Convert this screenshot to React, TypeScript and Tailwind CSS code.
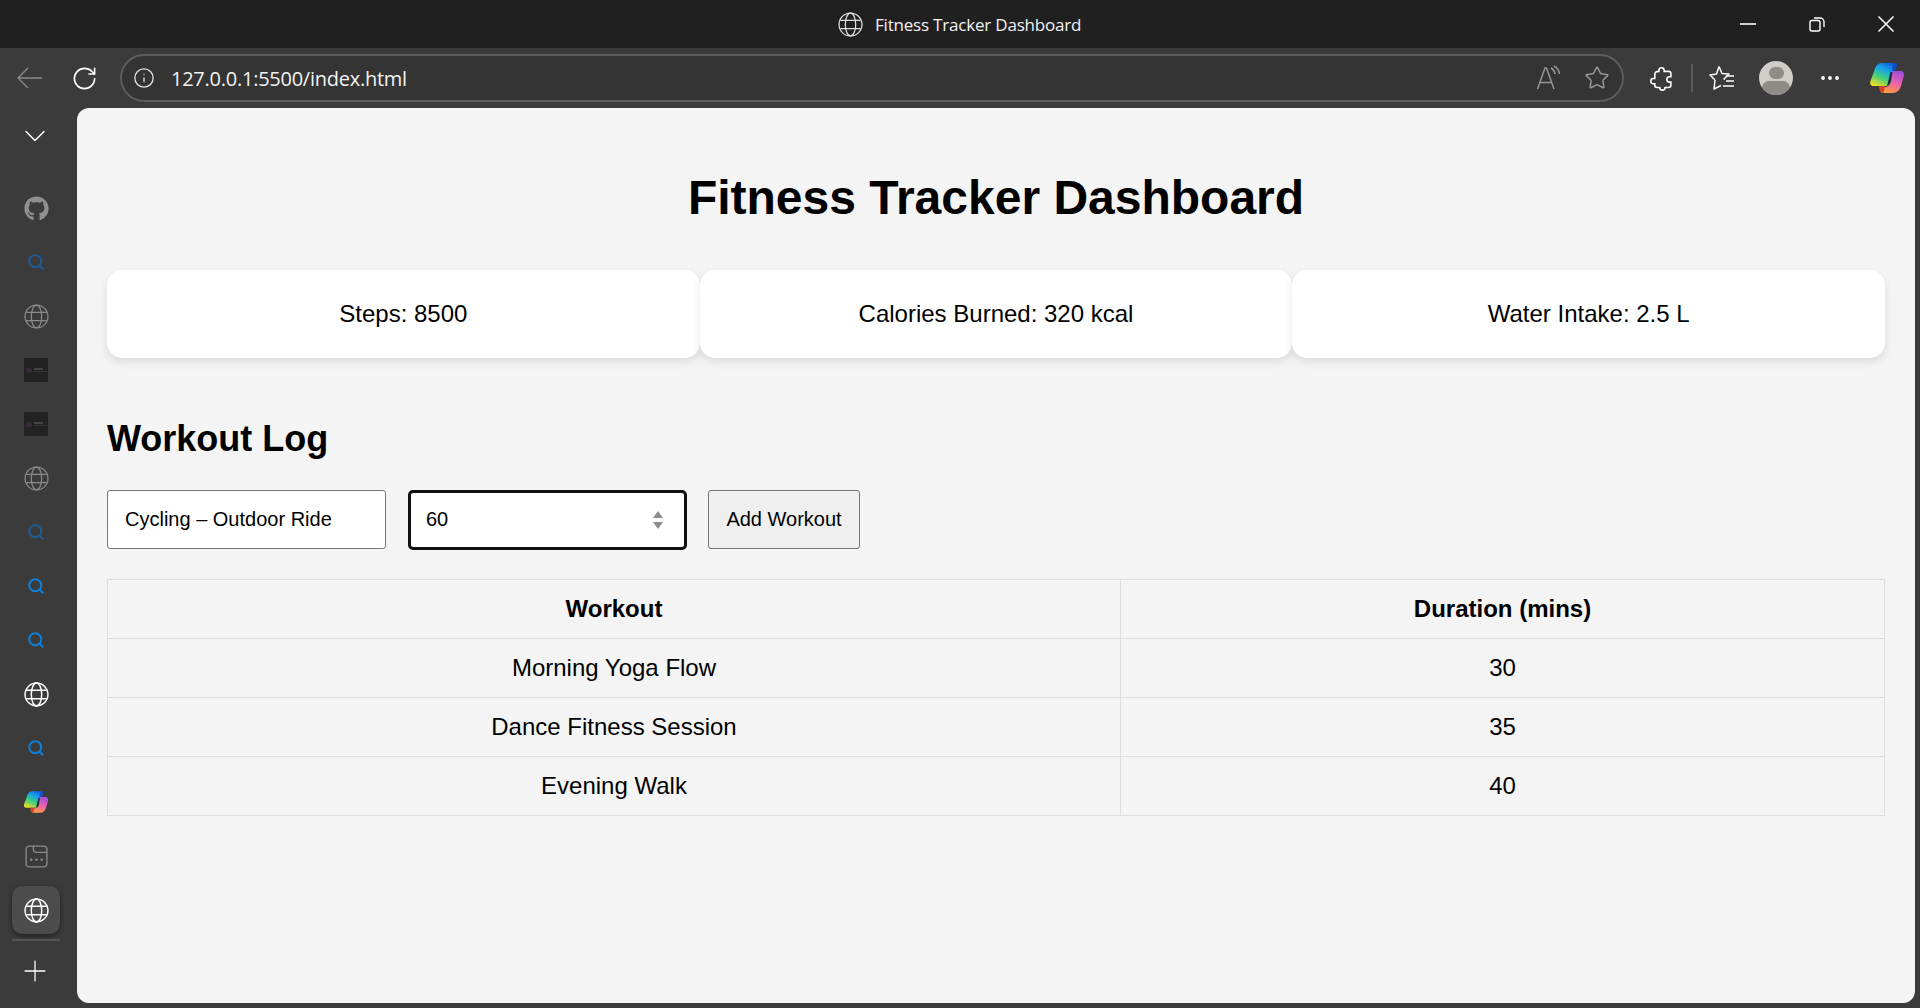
import React from 'react'
import { ChevronDown, Info, MoreHorizontal, Plus, RotateCw, Search, Star } from 'lucide-react'
import { FaGithub } from 'react-icons/fa'

const workouts = [
  { name: 'Morning Yoga Flow', mins: 30 },
  { name: 'Dance Fitness Session', mins: 35 },
  { name: 'Evening Walk', mins: 40 },
]

const stats = ['Steps: 8500', 'Calories Burned: 320 kcal', 'Water Intake: 2.5 L']

const GlobeIcon = ({ size, color, width = 1.2 }: { size: number; color: string; width?: number }) => (
  <svg width={size} height={size} viewBox="0 0 24 24" fill="none" stroke={color} strokeWidth={width}>
    <circle cx="12" cy="12" r="11" />
    <ellipse cx="12" cy="12" rx="5" ry="11" />
    <path d="M2.200 8h19.600M2.200 16h19.600" />
  </svg>
)

const CopilotLogo = ({ size, id }: { size: number; id: string }) => (
  <svg width={size} height={size} viewBox="0 0 36 36">
    <defs>
      <linearGradient id={`${id}Left`} x1="0.7" y1="0" x2="0.2" y2="1">
        <stop offset="0" stopColor="#1266e0" />
        <stop offset="0.3" stopColor="#18a5e8" />
        <stop offset="0.62" stopColor="#45d07a" />
        <stop offset="1" stopColor="#f4e020" />
      </linearGradient>
      <linearGradient id={`${id}Right`} x1="0.7" y1="0" x2="0.3" y2="1">
        <stop offset="0" stopColor="#a04ee0" />
        <stop offset="0.5" stopColor="#ee62a8" />
        <stop offset="1" stopColor="#ffa040" />
      </linearGradient>
    </defs>
    <path d="M13 3h12c2 0 3 1.500 2.300 3.500L23 20c-1 3-3 6-6 6H5c-3 0-4.500-2-3.500-5l4-11C7 5 9.500 3 13 3z" fill={`url(#${id}Left)`} />
    <path d="M23.500 11H31c3 0 4.700 2 3.800 5l-2.800 10c-1.200 4-4 7-8 7H14c-2 0-3-1.500-2.200-3.500L15 27c4 0 6-2 7-5l1.500-11z" fill={`url(#${id}Right)`} />
    <path d="M10 26h6l-1.500 7c-2.500 0-4.500-2.500-4.500-7z" fill="#d9402e" />
    <path d="M24 3h2c2 0 2.500 2 1.500 4L26 11h-3l1-8z" fill="#0f4fc4" />
    <path d="M21.500 12h2l-1.500 9c-.5 2.500-2 4-4 5z" fill="#1c2a3c" />
  </svg>
)

const DimLogo = () => (
  <div className="w-6 h-6 bg-[#222222] flex items-center justify-center gap-[2px]">
    <span className="w-[6px] h-[5px] rounded-full bg-[#3a2a3c]" />
    <span className="flex flex-col gap-[1px]">
      <span className="w-[9px] h-[2px] bg-[#444444]" />
      <span className="w-[13px] h-[1px] bg-[#333333]" />
    </span>
  </div>
)

const SideItem = ({ children }: { children: React.ReactNode }) => (
  <div className="h-[54px] w-full flex items-center justify-center">{children}</div>
)

const Sidebar = () => (
  <aside className="w-[72px] flex-none flex flex-col items-center">
    <div className="h-14 flex items-center justify-center mb-[17px] -ml-[2px]">
      <ChevronDown size={36} strokeWidth={1} className="text-white" />
    </div>
    <SideItem><FaGithub size={25} className="text-[#8f8f8f]" /></SideItem>
    <SideItem><Search size={18} strokeWidth={2.6} className="text-[#1f5c94]" /></SideItem>
    <SideItem><GlobeIcon size={25} color="#8a8a8a" /></SideItem>
    <SideItem><DimLogo /></SideItem>
    <SideItem><DimLogo /></SideItem>
    <SideItem><GlobeIcon size={25} color="#8a8a8a" /></SideItem>
    <SideItem><Search size={18} strokeWidth={2.6} className="text-[#1f5c94]" /></SideItem>
    <SideItem><Search size={18} strokeWidth={2.6} className="text-[#0f7fdc]" /></SideItem>
    <SideItem><Search size={18} strokeWidth={2.6} className="text-[#0f7fdc]" /></SideItem>
    <SideItem><GlobeIcon size={25} color="#ffffff" width={1.4} /></SideItem>
    <SideItem><Search size={18} strokeWidth={2.6} className="text-[#0f7fdc]" /></SideItem>
    <SideItem><CopilotLogo size={26} id="cpSide" /></SideItem>
    <SideItem>
      <svg width="25" height="25" viewBox="0 0 24 24" fill="none" stroke="#8a8a8a" strokeWidth="1.3">
        <rect x="2" y="2" width="20" height="20" rx="3" />
        <path d="M9 2v3a3 3 0 0 0 3 3h10" />
        <circle cx="7" cy="15" r="1.200" fill="#8a8a8a" stroke="none" />
        <circle cx="12" cy="15" r="1.200" fill="#8a8a8a" stroke="none" />
        <circle cx="17" cy="15" r="1.200" fill="#8a8a8a" stroke="none" />
      </svg>
    </SideItem>
    <SideItem>
      <div className="w-12 h-12 rounded-[10px] bg-[#4c4c4c] shadow-[0_2px_5px_rgba(0,0,0,0.45)] flex items-center justify-center">
        <GlobeIcon size={25} color="#ffffff" width={1.4} />
      </div>
    </SideItem>
    <div className="w-12 h-[2px] bg-[#555555] mt-[2px]" />
    <div className="mt-[13px] -ml-[2px]">
      <Plus size={34} strokeWidth={0.9} className="text-white" />
    </div>
  </aside>
)

const TitleBar = () => (
  <div className="h-12 flex-none bg-[#202020] flex items-center pl-[838px] text-[#f2f2f2]">
    <GlobeIcon size={25} color="#e0e0e0" />
    <span className="ml-[12px] mt-[1px] text-[17px] font-['Open_Sans',sans-serif] tracking-[-0.2px] flex-1">Fitness Tracker Dashboard</span>
    <div className="flex items-center gap-[49px] pr-[23px]">
      <svg width="22" height="22" viewBox="0 0 22 22" fill="none" stroke="white" strokeWidth="1.6">
        <path d="M3 11h16" />
      </svg>
      <svg width="18" height="18" viewBox="0 0 18 18" fill="none" stroke="white" strokeWidth="1.4">
        <rect x="2" y="5.500" width="10" height="10.500" rx="2" />
        <path d="M6 3h6a4 4 0 0 1 4 4v5" />
      </svg>
      <svg width="22" height="22" viewBox="0 0 22 22" fill="none" stroke="white" strokeWidth="1.5">
        <path d="M3.500 3.500l15 15M18.500 3.500l-15 15" />
      </svg>
    </div>
  </div>
)

const Toolbar = () => (
  <div className="h-[60px] flex-none bg-[#3b3b3b] flex items-center">
    <svg width="34" height="34" viewBox="0 0 34 34" fill="none" stroke="#8a8a8a" strokeWidth="1.3" className="ml-[13px]">
      <path d="M29 17H5M15 7 5 17l10 10" />
    </svg>
    <RotateCw size={27} strokeWidth={1.4} className="ml-[24px] text-white" />
    <div className="ml-[22px] w-[1504px] h-[48px] rounded-full border-2 border-[#5c5c5c] bg-[#343434] flex items-center pl-[11px] pr-[12px]">
      <Info size={22} strokeWidth={1.4} className="text-[#e6e6e6]" />
      <span className="ml-[16px] mt-[1px] text-[20px] tracking-[-0.25px] text-[#f2f2f2] font-['Open_Sans',sans-serif] flex-1">127.0.0.1:5500/index.html</span>
      <svg width="28" height="28" viewBox="0 0 28 28" fill="none" stroke="#969696" strokeWidth="1.5" className="mr-[20px]">
        <path d="M1.500 25 9 4h1.500L18 25M4 18.500h12" />
        <path d="M15 4c2 1 3.500 3 4 6M18 2c3 1.500 5 4.500 5.500 8" />
      </svg>
      <Star size={26} strokeWidth={1.4} className="text-[#969696]" />
    </div>
    <svg width="25" height="25" viewBox="0 0 28 28" fill="none" stroke="white" strokeWidth="1.8" className="ml-[25px]">
      <path d="M11 5c0-2 1.500-3 3-3s3 1 3 3v1h5c1.500 0 2.500 1 2.500 2.500V12h-1.500c-2 0-3 1.500-3 3s1 3 3 3h1.500v3.500c0 1.500-1 2.500-2.500 2.500H18c0 2-1.500 3-3 3s-3-1-3-3H9c-1.500 0-2.500-1-2.500-2.500V20H5c-2 0-3-1.500-3-3s1-3 3-3h1.500V9.500C6.500 7 8 6 11 6z" />
    </svg>
    <div className="ml-[17px] w-[2px] h-[28px] bg-[#5c5c5c]" />
    <svg width="30" height="30" viewBox="0 0 30 30" fill="none" stroke="white" strokeWidth="1.5" className="ml-[14px]">
      <path d="M12 3.500 15 10.500l7 .5-5 5 1 0M8 17 3 12l6.500-1L12 3.500M8 17 7 26l7-3.500" strokeLinejoin="round" />
      <path d="M19 13h8M19 18h8M16 23h11" />
    </svg>
    <div className="ml-[22px] w-[34px] h-[34px] rounded-full bg-[#cfcdc9] overflow-hidden flex flex-col items-center flex-none">
      <span className="mt-[6px] w-[15px] h-[16px] rounded-full bg-[#8f8b86]" />
      <span className="mt-[2px] w-[28px] h-[20px] rounded-full bg-[#8f8b86]" />
    </div>
    <MoreHorizontal size={24} strokeWidth={1.8} className="ml-[25px] text-white" />
    <div className="ml-[27px]"><CopilotLogo size={36} id="cpTop" /></div>
  </div>
)

const Dashboard = () => (
  <main className="flex-1 ml-[5px] mr-[5px] mb-[5px] rounded-[12px] bg-[#f4f4f4] px-[30px] text-black font-['Liberation_Sans',Arial,sans-serif]">
    <h1 className="mt-[62px] mb-[45px] h-[55px] leading-[55px] text-center text-[48px] font-bold">Fitness Tracker Dashboard</h1>
    <div className="grid grid-cols-3">
      {stats.map((stat) => (
        <div key={stat} className="h-[88px] rounded-[15px] bg-white shadow-[0_4px_10px_rgba(0,0,0,0.1)] flex items-center justify-center text-[24px]">{stat}</div>
      ))}
    </div>
    <h2 className="mt-[60px] mb-[31px] h-[41px] leading-[41px] text-[36px] font-bold">Workout Log</h2>
    <div className="flex items-center h-[59px] mb-[30px]">
      <input
        defaultValue="Cycling – Outdoor Ride"
        className="w-[279px] h-[59px] bg-white border border-[#767676] rounded-[3px] pl-[17px] pr-[18px] pb-[1px] text-[20px] outline-none"
      />
      <div className="ml-[22px] w-[279px] h-[60px] bg-white border-[3px] border-[#101010] rounded-[5px] flex items-center pl-[15px] pr-[20px]">
        <input defaultValue="60" className="flex-1 min-w-0 pb-[2px] text-[20px] outline-none" />
        <svg width="12" height="20" viewBox="0 0 12 20" fill="#8c8c8c">
          <path d="M6 1 11 8H1zM6 19 1 12h10z" />
        </svg>
      </div>
      <button className="ml-[21px] w-[152px] h-[59px] pb-[2px] bg-[#efefef] border border-[#767676] rounded-[3px] text-[20px]">Add Workout</button>
    </div>
    <table className="w-full border-collapse table-fixed text-[24px]">
      <thead>
        <tr className="h-[59px]">
          <th className="w-[1013px] border border-[#dddddd] font-bold">Workout</th>
          <th className="border border-[#dddddd] font-bold">Duration (mins)</th>
        </tr>
      </thead>
      <tbody>
        {workouts.map((w) => (
          <tr key={w.name} className="h-[59px]">
            <td className="border border-[#dddddd] text-center">{w.name}</td>
            <td className="border border-[#dddddd] text-center">{w.mins}</td>
          </tr>
        ))}
      </tbody>
    </table>
  </main>
)

export default function App() {
  return (
    <div className="w-[1920px] h-[1008px] overflow-hidden flex flex-col bg-[#3b3b3b]">
      <TitleBar />
      <Toolbar />
      <div className="flex-1 flex min-h-0">
        <Sidebar />
        <Dashboard />
      </div>
    </div>
  )
}
